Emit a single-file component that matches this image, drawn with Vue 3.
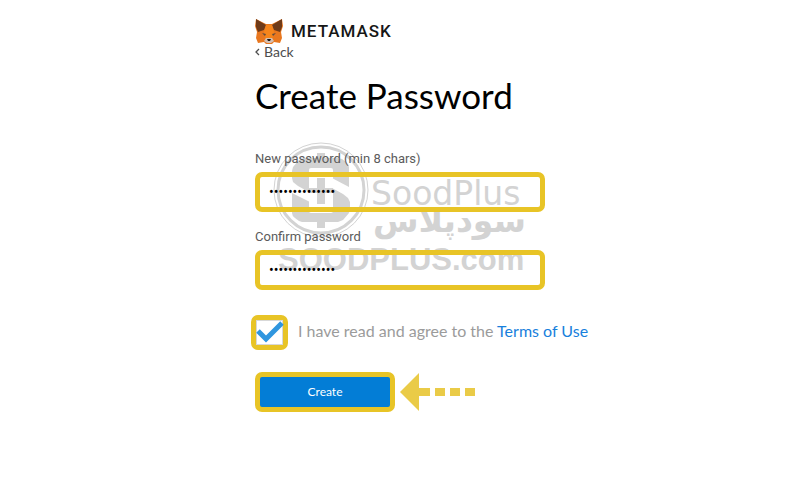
<template>
  <main class="page">
    <svg class="watermark" viewBox="0 0 256 136" aria-hidden="true">
      <g fill="none" stroke="#d3d3d3">
        <circle cx="49" cy="50" r="47" />
        <circle cx="49" cy="50" r="43" stroke-width="3" />
      </g>
      <g fill="#d3d3d3">
        <path d="M77 47V27q0-3-3-5l-4-3-4-1h-13v-5h-8v5H32l-5 2-6 7-1 4v7l1 4 5 4 31 17H40L20 53v20q0 3 3 5l4 3 3 1h15v6h8v-6h13l5-2 6-7 1-4v-7l-2-4-5-4-31-17h18z" />
        <text class="mark-latin" x="99" y="65">SoodPlus</text>
        <text class="mark-arabic" x="254" y="92">سودپلاس</text>
        <text class="mark-site" x="6" y="130">SOODPLUS.com</text>
      </g>
      <rect x="37" y="28" width="24" height="45" rx="2" fill="#fff" />
      <path d="M45 38h8v10h8v5h-8v11h-8V53h-8v-5h8z" fill="#d3d3d3" />
    </svg>

    <form class="content" @submit.prevent>
      <header class="brand">
        <svg class="fox" viewBox="0 0 28 26" aria-hidden="true">
          <path d="M1 1l10 5h6l10-5 1 7-2 6 1 6-2 5-6-1-2 2h-6l-2-2-6 1-2-5 1-6-2-6z" fill="#e8771f" />
          <path d="M1 1l10 6-2 5-6 2-2-5zM27 1L17 7l2 5 6 2 2-5z" fill="#6f3b19" />
          <path d="M11 7h6l2 7-2 8h-6l-2-8z" fill="#f6851b" />
          <path d="M7 15l4 1-1 2zM21 15l-4 1 1 2z" fill="#604c40" />
          <path d="M11 20h6l2 3-3 2h-4l-3-2z" fill="#d5bfb2" />
          <path d="M12 21h4l-1 2h-2z" fill="#161616" />
        </svg>
        <span class="wordmark">METAMASK</span>
      </header>
      <a class="back" href="#">
        <svg viewBox="0 0 5 8" aria-hidden="true">
          <path d="M4 1L1 4l3 3" fill="none" stroke="#4d4d4d" stroke-width="1.3" />
        </svg>
        Back
      </a>
      <h1>Create Password</h1>

      <label for="password">New password (min 8 chars)</label>
      <input id="password" v-model="password" class="field" type="password" />
      <label for="confirm">Confirm password</label>
      <input id="confirm" v-model="confirm" class="field" type="password" />

      <div class="terms">
        <span class="tick">
          <input id="agree" v-model="agreed" type="checkbox" />
          <svg v-if="agreed" viewBox="0 0 28 25" aria-hidden="true">
            <path d="M2 11l8 8L26 3" fill="none" stroke="#2f96df" stroke-width="5" />
          </svg>
        </span>
        <label for="agree">I have read and agree to the <a href="#">Terms of Use</a></label>
      </div>

      <div class="actions">
        <button type="submit">Create</button>
        <svg class="arrow" viewBox="0 0 76 38" aria-hidden="true">
          <path d="M0 19L19 0v15h11v8H19v15zM35 15h10v8H35zM50 15h10v8H50zM65 15h10v8H65z" fill="#eacb47" />
        </svg>
      </div>
    </form>
  </main>
</template>

<script setup>
import { ref } from "vue";

const password = ref("metamask123456");
const confirm = ref("metamask123456");
const agreed = ref(true);
</script>

<style>
body {
  background: #fff;
}
</style>

<style scoped>
.page {
  position: relative;
  max-width: 290px;
  margin: 0 auto;
  padding-top: 18px;
  font-family: Lato, "Open Sans", sans-serif;
}

.watermark {
  position: absolute;
  top: 140px;
  left: 17px;
  width: 256px;
  height: 136px;
}

.mark-latin {
  font: 33px "DejaVu Sans", sans-serif;
}

.mark-arabic {
  font: bold 33px "DejaVu Sans", sans-serif;
  direction: rtl;
}

.mark-site {
  font: bold 31px "Liberation Sans", sans-serif;
}

.content {
  position: relative;
  display: flex;
  flex-direction: column;
}

.brand {
  display: flex;
  align-items: center;
  gap: 8px;
  height: 26px;
}

.fox {
  width: 28px;
  height: 26px;
}

.wordmark {
  font: 500 17px Roboto, sans-serif;
  letter-spacing: 1px;
  color: #161616;
}

.back {
  display: flex;
  align-items: center;
  align-self: flex-start;
  gap: 4px;
  font-size: 14px;
  line-height: 16px;
  color: #4d4d4d;
  text-decoration: none;
}

.back svg {
  width: 5px;
  height: 8px;
}

h1 {
  margin: 13px 0 33px;
  font-size: 35px;
  font-weight: 400;
  line-height: 44px;
  white-space: nowrap;
  color: #000;
}

.content > label {
  font: 13px/18px Roboto, sans-serif;
  color: #5b5b5b;
}

.field {
  box-sizing: border-box;
  width: 100%;
  height: 40px;
  margin: 4px 0 16px;
  padding: 0 9px;
  border: 5px solid #e8c426;
  border-radius: 7px;
  background: transparent;
  font: 14px Roboto, sans-serif;
  color: #000;
  outline: none;
}

.terms {
  display: flex;
  align-items: center;
  gap: 10px;
  margin: 9px 0 22px -4px;
  white-space: nowrap;
  font-size: 16px;
  color: #9b9b9b;
}

.terms label {
  padding-bottom: 4px;
}

.terms a {
  color: #1880dc;
  text-decoration: none;
}

.tick {
  position: relative;
  box-sizing: border-box;
  flex: none;
  width: 37px;
  height: 35px;
  border: 5px solid #e8c426;
  border-radius: 7px;
}

.tick input {
  appearance: none;
  display: block;
  width: 100%;
  height: 100%;
  margin: 0;
  border: 1px solid #d8d8d8;
}

.tick svg {
  position: absolute;
  top: 0;
  left: 0;
  width: 28px;
  height: 25px;
}

.actions {
  display: flex;
  align-items: center;
  gap: 5px;
}

button {
  width: 140px;
  height: 40px;
  padding: 0 0 2px;
  border: 5px solid #e8c426;
  border-radius: 7px;
  background: #037dd6;
  font: 12px Lato, sans-serif;
  color: #fff;
}

.arrow {
  width: 76px;
  height: 38px;
}
</style>
